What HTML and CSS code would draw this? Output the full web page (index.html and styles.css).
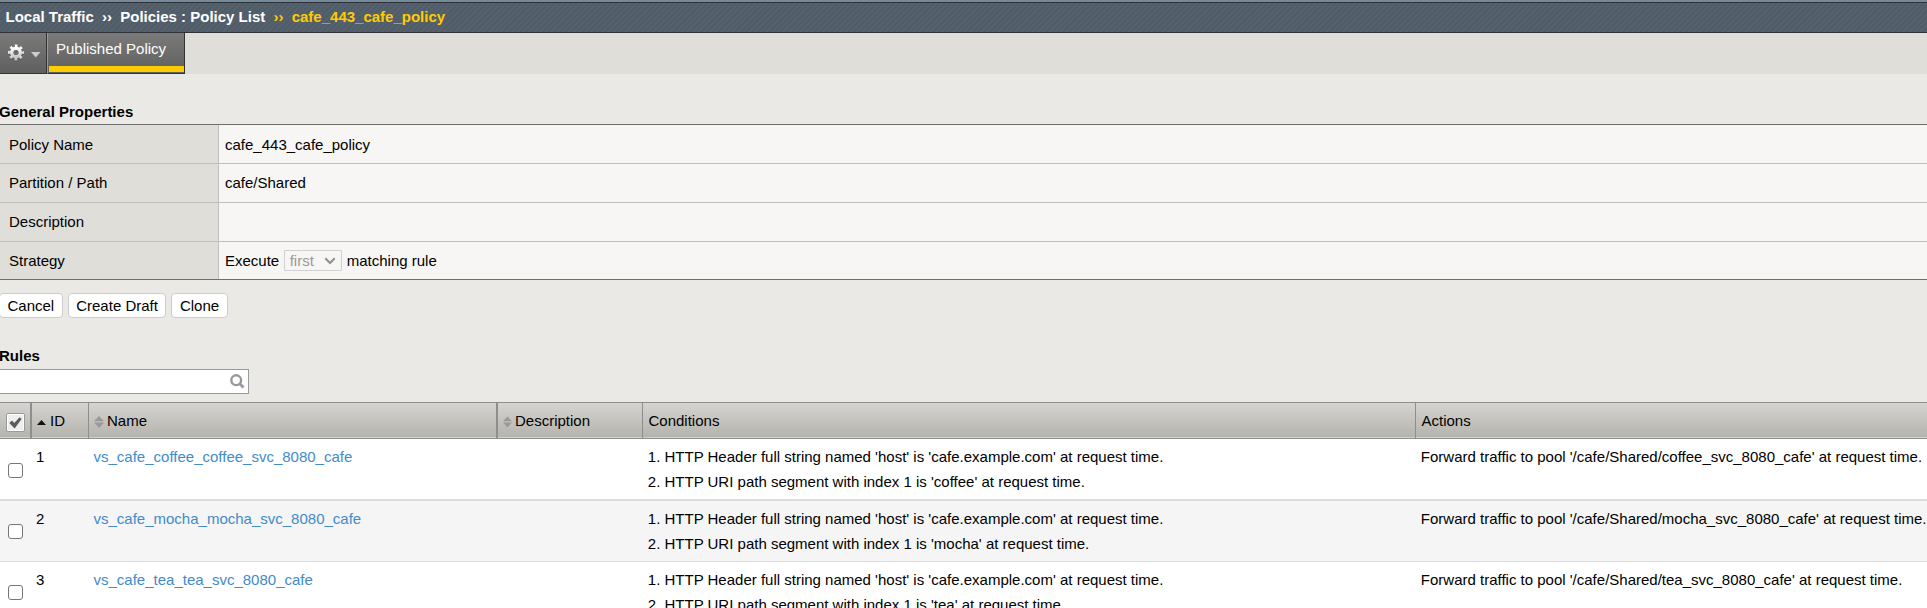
FILE: index.html
```html
<!DOCTYPE html>
<html lang="en">
<head>
<meta charset="utf-8">
<title>Policy List</title>
<link rel="stylesheet" href="styles.css">
</head>
<body>
<header class="crumbs">
  <span>Local Traffic</span><span class="sep">››</span><span>Policies : Policy List</span><span class="sep current">››</span><span class="current">cafe_443_cafe_policy</span>
</header>
<nav class="tabs">
  <div class="gear-tab">
    <svg class="gear" width="16" height="18" viewBox="0 0 16 18">
      <defs><linearGradient id="metal" x1="0" y1="0" x2="0" y2="1"><stop offset="0" stop-color="#fff"/><stop offset="1" stop-color="#c8c8c8"/></linearGradient></defs>
      <g fill="none" stroke="#444" stroke-opacity=".5" transform="translate(0 1)"><circle cx="8" cy="8.500" r="4.300" stroke-width="3.400"/><circle cx="8" cy="8.500" r="6.700" stroke-width="2.600" stroke-dasharray="2.700 2.562" stroke-dashoffset="1.350"/></g>
      <g fill="none" stroke="url(#metal)"><circle cx="8" cy="8.500" r="4.300" stroke-width="3.400"/><circle cx="8" cy="8.500" r="6.700" stroke-width="2.600" stroke-dasharray="2.700 2.562" stroke-dashoffset="1.350"/></g>
    </svg>
    <svg class="caret" width="10" height="6" viewBox="0 0 10 6"><path d="M0 0h9.5L4.75 5.5z" fill="#ccc"/></svg>
  </div>
  <div class="tab">Published Policy</div>
</nav>
<h2 class="title title-general">General Properties</h2>
<section class="props">
  <div class="prop"><div class="label">Policy Name</div><div class="value">cafe_443_cafe_policy</div></div>
  <div class="prop"><div class="label">Partition / Path</div><div class="value">cafe/Shared</div></div>
  <div class="prop"><div class="label">Description</div><div class="value"></div></div>
  <div class="prop"><div class="label">Strategy</div><div class="value">Execute
    <span class="select">first<svg width="12" height="8" viewBox="0 0 12 8"><path d="M1.3 1.3L6 6l4.700-4.700" fill="none" stroke="#8f8f8f" stroke-width="2"/></svg></span>matching rule</div></div>
</section>
<div class="buttons"><button class="btn">Cancel</button><button class="btn">Create Draft</button><button class="btn">Clone</button></div>
<h2 class="title title-rules">Rules</h2>
<div class="search">
  <svg width="15" height="15" viewBox="0 0 15 15"><circle cx="6.200" cy="6.200" r="4.900" fill="none" stroke="#999" stroke-width="2.400"/><path d="M9.500 9.600L13.500 13.600" stroke="#999" stroke-width="2.800"/></svg>
</div>
<section class="rules">
  <div class="row head">
    <div class="cell check-head double"><span class="check-box"><svg width="13" height="12" viewBox="0 0 13 12"><path d="M0.300 6L3 3.600l2.300 2.500L10.600 0.300l2 1.700L5.600 11.600z" fill="#5a5a5a"/></svg></span></div>
    <div class="cell h-id"><svg width="9" height="5" viewBox="0 0 9 5"><path d="M0 5L4.500 0 9 5z" fill="#111"/></svg>ID</div>
    <div class="cell h-sort double"><svg width="10" height="12" viewBox="0 0 10 12"><path d="M0 5.300L5 0l5 5.300zM0 6.500h10L5 12z" fill="#999"/></svg>Name</div>
    <div class="cell h-sort"><svg width="9" height="12" viewBox="0 0 10 12"><path d="M0 5.300L5 0l5 5.300zM0 6.500h10L5 12z" fill="#999"/></svg>Description</div>
    <div class="cell">Conditions</div>
    <div class="cell">Actions</div>
  </div>
  <div class="row body first">
    <div class="pick"><span class="checkbox"></span></div>
    <div class="id">1</div>
    <div class="name"><a class="link">vs_cafe_coffee_coffee_svc_8080_cafe</a></div>
    <div></div>
    <div class="conds"><div>1. HTTP Header full string named 'host' is 'cafe.example.com' at request time.</div><div>2. HTTP URI path segment with index 1 is 'coffee' at request time.</div></div>
    <div class="action">Forward traffic to pool '/cafe/Shared/coffee_svc_8080_cafe' at request time.</div>
  </div>
  <div class="row body even">
    <div class="pick"><span class="checkbox"></span></div>
    <div class="id">2</div>
    <div class="name"><a class="link">vs_cafe_mocha_mocha_svc_8080_cafe</a></div>
    <div></div>
    <div class="conds"><div>1. HTTP Header full string named 'host' is 'cafe.example.com' at request time.</div><div>2. HTTP URI path segment with index 1 is 'mocha' at request time.</div></div>
    <div class="action">Forward traffic to pool '/cafe/Shared/mocha_svc_8080_cafe' at request time.</div>
  </div>
  <div class="row body">
    <div class="pick"><span class="checkbox"></span></div>
    <div class="id">3</div>
    <div class="name"><a class="link">vs_cafe_tea_tea_svc_8080_cafe</a></div>
    <div></div>
    <div class="conds"><div>1. HTTP Header full string named 'host' is 'cafe.example.com' at request time.</div><div>2. HTTP URI path segment with index 1 is 'tea' at request time.</div></div>
    <div class="action">Forward traffic to pool '/cafe/Shared/tea_svc_8080_cafe' at request time.</div>
  </div>
</section>
</body>
</html>
```

FILE: styles.css
```css
* { box-sizing: border-box; }
body {
  margin: 0;
  height: 608px;
  overflow: hidden;
  background: #eae9e5;
  color: #000;
  font: 15px/18px "Liberation Sans", Arial, sans-serif;
}
svg { display: block; flex: none; }

.crumbs {
  display: flex;
  height: 33px;
  padding: 5px 0 0 5.5px;
  border-top: 2px solid #748a9b;
  border-bottom: 1px solid #2f3236;
  box-shadow: inset 0 1px #2f3236;
  background: repeating-linear-gradient(135deg, #505c68 0 2px, #55616d 2px 4px);
  color: #fff;
  font-weight: bold;
  line-height: 19px;
  white-space: nowrap;
}
.crumbs .sep { margin: 0 8.2px; }
.crumbs .current { color: #fc0; }

.tabs { display: flex; height: 41px; background: #dfded9; }
.gear-tab {
  display: flex;
  align-items: flex-start;
  width: 47px;
  padding: 11px 0 0 8px;
  border-right: 1px solid #333;
  border-bottom: 1px solid #333;
  background: linear-gradient(#7b7b7b, #5f5f5f);
}
.caret { margin: 8px 0 0 7px; }
.tab {
  width: 138px;
  padding: 7px 0 0 8px;
  border: solid #333;
  border-width: 0 1px 1px 0;
  border-left: 1px solid #999;
  background:
    linear-gradient(#fc0, #fc0) 1px 33px / 135px 6px no-repeat,
    linear-gradient(#7b7b7b, #5f5f5f);
  color: #fff;
}

.title { margin: 0 0 0 -1px; font-size: 15px; line-height: 18px; }
.title-general { padding: 29px 0 3px; }
.title-rules { padding: 29px 0 4px; }

.props { height: 156px; border: solid #6e6e6e; border-width: 1px 0; }
.prop {
  display: grid;
  grid-template-columns: 219px 1fr;
  grid-template-rows: 100%;
  height: 39px;
  border-bottom: 1px solid #bfbfbb;
  line-height: 38px;
}
.prop:first-child { line-height: 40px; }
.prop:last-child { height: 37px; border-bottom: 0; }
.label { padding-left: 9px; border-right: 1px solid #bfbfbb; background: #dfded9; }
.value { display: flex; overflow: hidden; padding-left: 6px; background: #f7f6f4; }
.label { overflow: hidden; }
.select {
  display: flex;
  align-items: center;
  justify-content: space-between;
  width: 58px;
  height: 21px;
  margin: 8px 5px 0 4.5px;
  padding: 0 5px;
  border: 1px solid #d0d0d0;
  border-radius: 1px;
  color: #999;
  line-height: 19px;
}

.buttons { display: flex; gap: 5px; height: 38px; margin-left: -1px; padding-top: 13px; }
.btn {
  height: 25px;
  padding: 0 7.5px;
  border: 1px solid #ccc;
  border-radius: 4px;
  background: #fff;
  color: #000;
  font: 15px/23px "Liberation Sans", Arial, sans-serif;
}
.search {
  display: flex;
  justify-content: flex-end;
  width: 249px;
  height: 25px;
  padding: 4px 3px 0 0;
  border: 1px solid #999;
  border-left: 0;
  background: #fff;
}

.rules { margin-top: 8px; }
.row { display: grid; grid-template-columns: 32px 57px 409px 145px 773px 1fr; }
.head {
  height: 37px;
  border: solid #8e8e8e;
  border-width: 1px 0;
  box-shadow: inset 0 -1px #d3d2ce;
  background: linear-gradient(#d5d4d0, #b3b2ac);
}
.cell { display: flex; padding-left: 5.5px; border-right: 1px solid #8e8e8e; line-height: 36px; }
.cell:last-child { border-right: 0; }
.double { border-right-width: 2px; }
.check-head { padding: 10px 0 0 6px; }
.check-box { display: grid; place-items: center; width: 19px; height: 19px; border: 1px solid #999; border-radius: 2px; background: #eee; box-shadow: inset 0 0 0 1px #fff; }
.h-id { gap: 4px; padding-left: 5px; }
.h-id svg { margin-top: 17px; }
.h-sort { gap: 3.5px; padding-left: 4.5px; }
.h-sort svg { margin-top: 13px; }
.body { height: 61px; padding-top: 9px; border-bottom: 1px solid #dcdcdc; background: #fff; white-space: nowrap; }
.first { height: 62px; border-bottom-width: 2px; }
.even { background: #f5f5f5; }
.pick { padding: 14px 0 0 8px; }
.first .pick { padding-top: 15px; }
.checkbox { display: block; width: 15px; height: 15px; border: 1px solid #767676; border-radius: 3px; background: #fff; }
.id { padding-left: 4px; }
.name { padding-left: 4.5px; }
.link { color: #428bca; }
.conds { padding-left: 4.8px; }
.conds div { margin-bottom: 7px; }
.action { padding-left: 4.8px; }
```
